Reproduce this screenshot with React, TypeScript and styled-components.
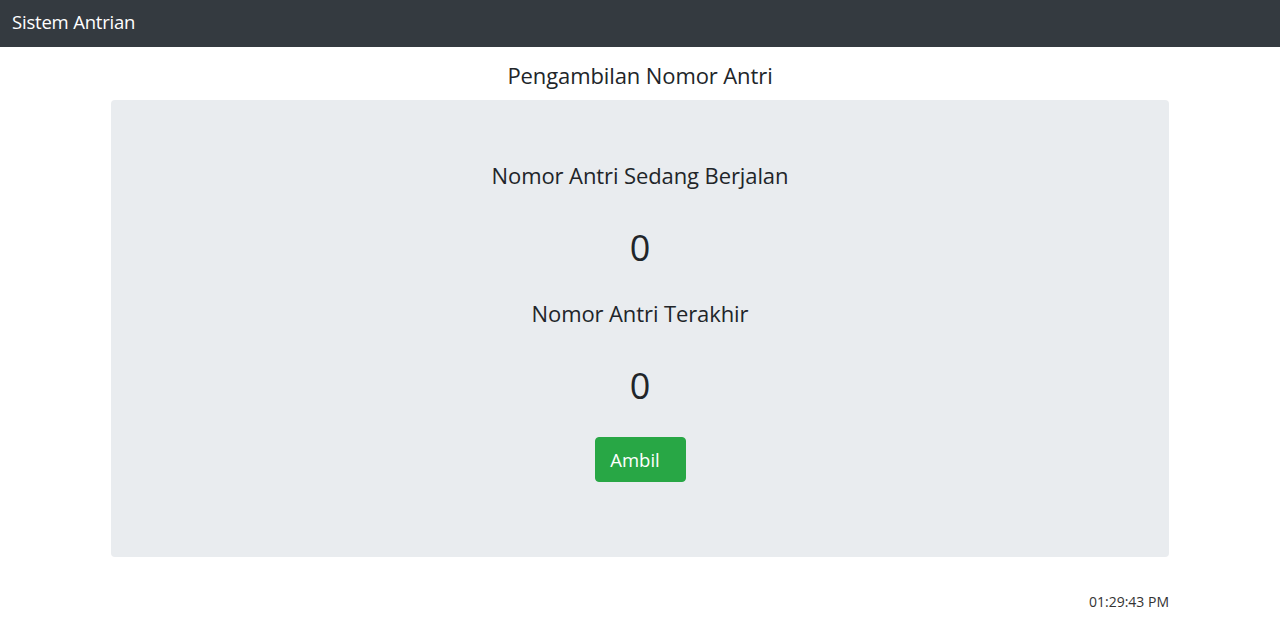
import React from "react";
import styled, { createGlobalStyle } from "styled-components";

const Global = createGlobalStyle`
  html, body { margin: 0; padding: 0; background: #fff; }
  body { font-family: "Open Sans", "Noto Sans", sans-serif; color: #212529; }
`;

const Navbar = styled.nav`
  height: 47px;
  background: #343a40;
  display: flex;
  align-items: center;
  padding: 0 12px 4px;
  box-sizing: border-box;
`;

const Brand = styled.span`
  color: #fff;
  font-size: 18.5px;
  letter-spacing: -0.2px;
`;

const Container = styled.main`
  width: 1058px;
  margin: 0 auto;
  display: flex;
  flex-direction: column;
`;

const PageTitle = styled.h1`
  margin: 0;
  height: 53px;
  padding-top: 3px;
  box-sizing: border-box;
  display: flex;
  align-items: center;
  justify-content: center;
  font-size: 22px;
  font-weight: 400;
  color: #212529;
  letter-spacing: -0.1px;
`;

const Jumbotron = styled.section`
  background: #e9ecef;
  border-radius: 4px;
  height: 457px;
  box-sizing: border-box;
  padding-top: 59px;
  display: flex;
  flex-direction: column;
  align-items: center;
`;

const Label = styled.h4`
  margin: 0;
  height: 32px;
  line-height: 32px;
  font-size: 22px;
  font-weight: 400;
  color: #212529;
  letter-spacing: -0.1px;
`;

const Number = styled.div`
  margin-top: 34px;
  margin-bottom: 26px;
  height: 46px;
  line-height: 46px;
  font-size: 36px;
  font-weight: 400;
  color: #212529;
`;

const Button = styled.button`
  margin-top: 2px;
  width: 91px;
  height: 45px;
  background: #28a745;
  border: 1px solid #28a745;
  border-radius: 4px;
  color: #fff;
  font-family: inherit;
  font-size: 18.5px;
  padding: 0 10px 0 0;
`;

const Footer = styled.div`
  display: flex;
  justify-content: flex-end;
  padding-top: 35px;
  font-size: 14px;
  color: #333;
`;

export default function App() {
  return (
    <>
      <Global />
      <Navbar>
        <Brand>Sistem Antrian</Brand>
      </Navbar>
      <Container>
        <PageTitle>Pengambilan Nomor Antri</PageTitle>
        <Jumbotron>
          <Label>Nomor Antri Sedang Berjalan</Label>
          <Number>0</Number>
          <Label>Nomor Antri Terakhir</Label>
          <Number>0</Number>
          <Button>Ambil</Button>
        </Jumbotron>
        <Footer>01:29:43 PM</Footer>
      </Container>
    </>
  );
}
